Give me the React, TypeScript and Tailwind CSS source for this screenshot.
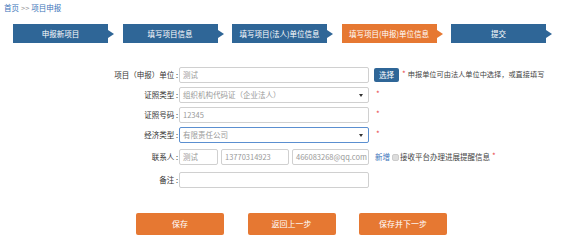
import React from 'react';

const font = { fontFamily: '"Noto Sans CJK SC", "Liberation Sans", sans-serif' };

const steps = [
  { label: '申报新项目', active: false },
  { label: '填写项目信息', active: false },
  { label: '填写项目(法人)单位信息', active: false },
  { label: '填写项目(申报)单位信息', active: true },
  { label: '提交', active: false },
];

const Step: React.FC<{ label: string; active: boolean }> = ({ label, active }) => (
  <div className="flex items-center">
    <div
      className={`w-[95px] h-[19px] flex items-center justify-center text-white text-[7.5px] leading-none ${
        active ? 'bg-[#e67832]' : 'bg-[#2f6697]'
      }`}
    >
      {label}
    </div>
    <div
      className={`w-0 h-0 border-y-[4px] border-y-transparent border-l-[6px] ${
        active ? 'border-l-[#e67832]' : 'border-l-[#2f6697]'
      }`}
    />
  </div>
);

const Label: React.FC<{ children: React.ReactNode }> = ({ children }) => (
  <div className="w-[179px] shrink-0 text-right pr-[1px] text-[7.5px] text-[#333] leading-none">
    {children}
  </div>
);

const Input: React.FC<{ value: string; w: string; focused?: boolean; select?: boolean }> = ({
  value,
  w,
  focused,
  select,
}) => (
  <div
    className={`${w} h-[16px] shrink-0 flex items-center justify-between pl-[3px] pr-[5px] rounded-[2px] border bg-white text-[7.5px] text-[#999] leading-none ${
      focused ? 'border-[#5b8fd0]' : 'border-[#d0d0d0]'
    }`}
  >
    <span>{value}</span>
    {select && (
      <span className="w-0 h-0 border-x-[2px] border-x-transparent border-t-[3px] border-t-[#333]" />
    )}
  </div>
);

const Star = () => (
  <span className="h-[16px] flex items-start pt-[3px] text-[#e9474a] text-[8px] leading-none">*</span>
);

export default function App() {
  return (
    <div className="w-[578px] h-[242px] bg-white overflow-hidden" style={font}>
      {/* Breadcrumb */}
      <div className="pt-[4px] pl-[4px] h-[13px] text-[7.5px] leading-none">
        <span className="text-[#3b73b9]">首页</span>
        <span className="text-[#999] mx-[2px]">&gt;&gt;</span>
        <span className="text-[#3b73b9]">项目申报</span>
      </div>

      {/* Steps */}
      <div className="mt-[11px] pl-[13px] flex gap-[8.5px]">
        {steps.map((s) => (
          <Step key={s.label} label={s.label} active={s.active} />
        ))}
      </div>

      {/* Form */}
      <div className="mt-[24px] flex flex-col">
        <div className="flex items-center h-[16px]">
          <Label>项目（申报）单位 :</Label>
          <Input value="测试" w="w-[190px]" />
          <button className="ml-[5px] h-[14px] w-[25px] bg-[#2f6697] rounded-[2px] text-white text-[7.5px] leading-none">
            选择
          </button>
          <span className="ml-[3px] flex items-center gap-[2px] text-[7.2px] text-[#444] leading-none">
            <Star />
            申报单位可由法人单位中选择，或直接填写
          </span>
        </div>

        <div className="flex items-center h-[16px] mt-[4px]">
          <Label>证照类型 :</Label>
          <Input value="组织机构代码证（企业法人）" w="w-[190px]" select />
          <span className="ml-[7px]">
            <Star />
          </span>
        </div>

        <div className="flex items-center h-[16px] mt-[4px]">
          <Label>证照号码 :</Label>
          <Input value="12345" w="w-[190px]" />
          <span className="ml-[7px]">
            <Star />
          </span>
        </div>

        <div className="flex items-center h-[16px] mt-[4px]">
          <Label>经济类型 :</Label>
          <Input value="有限责任公司" w="w-[190px]" select focused />
          <span className="ml-[7px]">
            <Star />
          </span>
        </div>

        <div className="flex items-center h-[16px] mt-[6px]">
          <Label>联系人 :</Label>
          <div className="flex gap-[3px]">
            <Input value="测试" w="w-[39px]" />
            <Input value="13770314923" w="w-[68px]" />
            <Input value="466083268@qq.com" w="w-[77px]" />
          </div>
          <span className="ml-[6px] text-[7.5px] text-[#3b73b9] leading-none">新增</span>
          <span className="ml-[2px] w-[7px] h-[7px] rounded-[2px] bg-[#ddd] border border-[#ccc]" />
          <span className="ml-[1px] text-[7.5px] text-[#444] leading-none">接收平台办理进展提醒信息</span>
          <span className="ml-[2px]">
            <Star />
          </span>
        </div>

        <div className="flex items-center h-[16px] mt-[7px]">
          <Label>备注 :</Label>
          <Input value="" w="w-[190px]" />
        </div>
      </div>

      {/* Buttons */}
      <div className="mt-[25px] pl-[136px] flex gap-[23.5px]">
        {['保存', '返回上一步', '保存并下一步'].map((t) => (
          <button
            key={t}
            className="w-[88px] h-[22px] bg-[#e67832] rounded-[2px] text-white text-[8px] leading-none"
          >
            {t}
          </button>
        ))}
      </div>
    </div>
  );
}
